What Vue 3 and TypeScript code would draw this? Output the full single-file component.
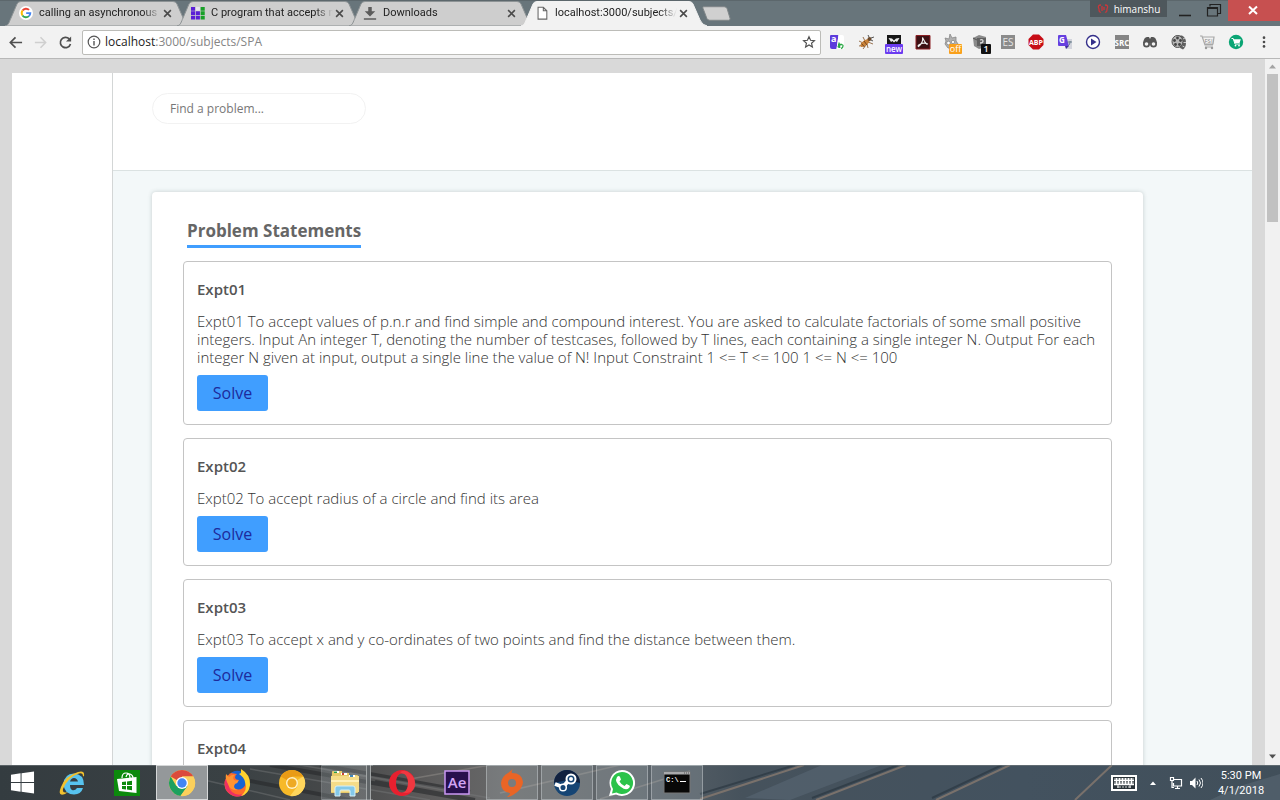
<script setup lang="ts">
import { ref } from 'vue'

interface Tab { title: string; icon: string; active: boolean }
interface Problem { name: string; text: string }

const tabs: Tab[] = [
  { title: 'calling an asynchronous f', icon: 'google', active: false },
  { title: 'C program that accepts n', icon: 'grid', active: false },
  { title: 'Downloads', icon: 'download', active: false },
  { title: 'localhost:3000/subjects/S', icon: 'page', active: true },
]

const extensions: string[] = [
  'translate', 'bug', 'mail', 'acrobat', 'cat', 'cube', 'es', 'abp',
  'gtranslate', 'play', 'src', 'binoculars', 'reel', 'fsi', 'cart',
]

const problems: Problem[] = [
  {
    name: 'Expt01',
    text: 'Expt01 To accept values of p.n.r and find simple and compound interest. You are asked to calculate factorials of some small positive integers. Input An integer T, denoting the number of testcases, followed by T lines, each containing a single integer N. Output For each integer N given at input, output a single line the value of N! Input Constraint 1 <= T <= 100 1 <= N <= 100',
  },
  { name: 'Expt02', text: 'Expt02 To accept radius of a circle and find its area' },
  { name: 'Expt03', text: 'Expt03 To accept x and y co-ordinates of two points and find the distance between them.' },
  { name: 'Expt04', text: '' },
]

const apps: { id: string; state: string }[] = [
  { id: 'ie', state: '' },
  { id: 'store', state: '' },
  { id: 'chrome', state: 'current' },
  { id: 'firefox', state: '' },
  { id: 'canary', state: '' },
  { id: 'explorer', state: 'stacked' },
  { id: 'opera', state: '' },
  { id: 'ae', state: '' },
  { id: 'origin', state: 'open' },
  { id: 'steam', state: 'open' },
  { id: 'whatsapp', state: 'open' },
  { id: 'cmd', state: 'open' },
]

const query = ref('')
</script>

<template>
  <div class="screen">
    <header class="tabstrip">
      <div class="tabs">
        <div v-for="t in tabs" :key="t.title" class="tab" :class="{ active: t.active }">
          <svg class="tab-shape" viewBox="0 0 186 26" preserveAspectRatio="none" aria-hidden="true">
            <path d="M0 26C4 25 4 22 6 18L12 4Q13 1.500 16 1.500H168Q171 1.500 172 4L179 20Q181 25 186 26Z" />
          </svg>
          <svg class="favicon" viewBox="0 0 16 16" aria-hidden="true">
            <template v-if="t.icon === 'google'">
              <circle cx="8" cy="8" r="8" fill="#fff" />
              <g fill="none" stroke-width="2.200">
                <path d="M4 5.200A4.900 4.900 0 0 1 11.500 4.500" stroke="#ea4335" />
                <path d="M4 5.200A4.900 4.900 0 0 0 4 10.800" stroke="#fbbc05" />
                <path d="M4 10.800A4.900 4.900 0 0 0 11.300 11.600" stroke="#34a853" />
                <path d="M11.300 11.600A4.700 4.700 0 0 0 12.900 8.100H8.200" stroke="#4285f4" />
              </g>
            </template>
            <template v-else-if="t.icon === 'grid'">
              <path d="M0 1h4.700v4.400H0zM0 6h4.700v4.400H0zM0 11h4.700v4.400H0zM5.500 6h4.700v4.400H5.500zM5.500 11h4.700v4.400H5.500z" fill="#5b1fd6" />
              <path d="M11 1h4.700v4.400H11zM11 6h4.700v4.400H11zM11 11h4.700v4.400H11z" fill="#18a028" />
              <path d="M5.500 1h4.700v4.400H5.500z" fill="#e8e4ee" />
            </template>
            <template v-else-if="t.icon === 'download'">
              <path d="M6 1h4v5h4L8 12 2 6h4zM1 14h14v1.800H1z" fill="#5c5c5c" />
            </template>
            <template v-else>
              <path d="M3.500 1.500h6l4 4v9.500h-10zM9.500 1.500v4h4" fill="#fff" stroke="#666" stroke-width="1.200" />
            </template>
          </svg>
          <button type="button" class="tab-title">{{ t.title }}</button>
          <button type="button" class="tab-close" aria-label="Close tab">
            <svg viewBox="0 0 8 8" aria-hidden="true"><path d="M1 1l6 6M7 1L1 7" stroke="#4a4a4a" stroke-width="1.400" /></svg>
          </button>
        </div>
        <button type="button" class="new-tab" aria-label="New tab">
          <svg viewBox="0 0 30 15" aria-hidden="true"><path d="M1.500.5H23q2 0 3 2l3 10q.5 2-1.500 2H8q-2 0-3-2L1 2Q.5.500 1.500.500z" fill="#d0d0d0" stroke="#7f8688" /></svg>
        </button>
      </div>
      <div class="window-controls">
        <button type="button" class="profile">
          <svg viewBox="0 0 12 10" aria-hidden="true"><path d="M4 1Q0 1 2 5q0 4 2 3M5 2v5M8 1q4 0 2 4 0 4-2 3M7 3v3" fill="none" stroke="#c9373b" stroke-width="1.300" /></svg>
          himanshu
        </button>
        <button type="button" class="win" aria-label="Minimize"><svg viewBox="0 0 16 16" aria-hidden="true"><path d="M2 12.500h12" stroke="#222" stroke-width="1.600" /></svg></button>
        <button type="button" class="win" aria-label="Restore"><svg viewBox="0 0 16 16" aria-hidden="true"><path d="M1.500 4.500h10v8.500h-10zM1.500 5.500h10M4 3.500V1.500h10.500v9H12" fill="none" stroke="#222" stroke-width="1.200" /></svg></button>
        <button type="button" class="win close" aria-label="Close"><svg viewBox="0 0 16 16" aria-hidden="true"><path d="M3 3.500l8 7.500M11 3.500l-8 7.500" stroke="#fff" stroke-width="2" /></svg></button>
      </div>
    </header>

    <div class="toolbar">
      <button type="button" class="nav" aria-label="Back"><svg viewBox="0 0 16 16" aria-hidden="true"><path d="M15 8H3M8 2.500L2.500 8 8 13.500" fill="none" stroke="#4f4f4f" stroke-width="1.800" /></svg></button>
      <button type="button" class="nav" aria-label="Forward"><svg viewBox="0 0 16 16" aria-hidden="true"><path d="M2 8h11M8 2.500L13.500 8 8 13.500" fill="none" stroke="#cfcfcf" stroke-width="1.600" /></svg></button>
      <button type="button" class="nav" aria-label="Reload"><svg viewBox="0 0 16 16" aria-hidden="true"><path d="M13.300 9.500A5.500 5.500 0 1 1 12 4.200" fill="none" stroke="#4f4f4f" stroke-width="1.800" /><path d="M14 1.500V7H8.500z" fill="#4f4f4f" /></svg></button>
      <div class="address">
        <svg class="info" viewBox="0 0 14 14" aria-hidden="true"><circle cx="7" cy="7" r="5.800" fill="none" stroke="#555" stroke-width="1.200" /><path d="M7 6v4.500M7 3.500v1.500" stroke="#555" stroke-width="1.400" /></svg>
        <span class="url"><b>localhost</b>:3000/subjects/SPA</span>
        <button type="button" class="star" aria-label="Bookmark this page"><svg viewBox="0 0 16 16" aria-hidden="true"><path d="M8 2l1.800 4.100 4.400.4-3.300 2.900 1 4.300L8 11.400l-3.900 2.300 1-4.300L1.800 6.500l4.400-.4z" fill="none" stroke="#4f4f4f" stroke-width="1.300" /></svg></button>
      </div>
      <div class="extensions">
        <button v-for="e in extensions" :key="e" type="button" class="ext" :aria-label="e">
          <svg viewBox="0 0 20 20" aria-hidden="true">
            <template v-if="e === 'translate'">
              <path d="M4 3h7.500l-2 14H5q-2 0-2-2V4q0-1 1-1z" fill="#5c3bdc" /><path d="M11.500 3H15q2 0 2 2v12H9.500z" fill="#fff" />
              <text x="4" y="9.500" font-size="9" font-weight="700" fill="#fff">a</text><path d="M12 10.500l.8 5.500M11 12.500h4M12 15.500q-2-1 .5-2.500 4-1 3.500 1 0 2-2 2.500" fill="none" stroke="#2aa845" stroke-width="1.300" />
            </template>
            <template v-else-if="e === 'bug'">
              <path d="M3 9l4 2M7 5l2 4M3 14l5-1M7 17l3-4M12 16l-1-4M17 12l-5-2" stroke="#805025" stroke-width=".8" /><ellipse cx="9" cy="11" rx="5.500" ry="2.600" transform="rotate(-38 9 11)" fill="#c98238" /><path d="M5.500 11.500l3 3.500M8 9l3 4" stroke="#75441c" /><circle cx="13.500" cy="7" r="2" fill="#6b4a2c" /><path d="M13 5l-1-2M15 6l3-1M15 8l2 1" stroke="#555" />
            </template>
            <template v-else-if="e === 'mail'">
              <path d="M3 3h14v10H3z" fill="#161616" /><path d="M4.500 6l3.500.5L10 8.500l2-2 3.500-.5-2.500 4-1.500-1-1.500 1.500L8.500 9 7 10z" fill="#eee" /><rect x="1" y="12" width="18" height="10" rx="1" fill="#6b3cf0" /><text x="10" y="20" font-size="8" font-weight="600" text-anchor="middle" fill="#fff">new</text>
            </template>
            <template v-else-if="e === 'acrobat'">
              <path d="M3 3.500h14v13.500H3z" fill="#3c1114" stroke="#8c2025" /><path d="M9.500 5.500q1 5-4 9-1.500-1 3-3 4-1 6 .5-1 1.500-5-6.500z" fill="none" stroke="#eee" stroke-width="1.100" />
            </template>
            <template v-else-if="e === 'cat'">
              <path d="M5 9l-1-3 4 1 1-5 2 4 4-1v4l2 3-4 4H7l-3-4z" fill="#b0b0b0" stroke="#888" stroke-width=".8" /><circle cx="7.500" cy="11" r="1.800" fill="#fff" stroke="#777" stroke-width=".6" /><circle cx="12" cy="10" r="1.600" fill="#fff" stroke="#777" stroke-width=".6" /><rect x="8" y="12" width="13" height="10" rx="1" fill="#f9a01b" /><text x="14.500" y="20" font-size="9" text-anchor="middle" fill="#fff">off</text>
            </template>
            <template v-else-if="e === 'cube'">
              <path d="M3 6l6-3 7 2v10l-7 2-5-3z" fill="#8a8a8a" /><path d="M7 6h9v8H7z" fill="#606060" /><path d="M3 6l4 2" stroke="#555" /><path d="M10 8q3-1 3 1t-3 2" fill="none" stroke="#ddd" stroke-width="1.300" /><rect x="11" y="12" width="10" height="10" rx="1" fill="#111" /><text x="16" y="20" font-size="9" font-weight="600" text-anchor="middle" fill="#fff">1</text>
            </template>
            <template v-else-if="e === 'es'">
              <path d="M3 3h14v14H3z" fill="#8b8b8b" /><text x="10" y="13.500" font-size="10" text-anchor="middle" fill="#e4e4e4">ES</text>
            </template>
            <template v-else-if="e === 'abp'">
              <path d="M7 2.500h6L17.500 7v6L13 17.500H7L2.500 13V7z" fill="#c70d16" /><text x="10" y="12.500" font-size="7" font-weight="700" text-anchor="middle" fill="#fff">ABP</text>
            </template>
            <template v-else-if="e === 'gtranslate'">
              <path d="M10 7h7v10h-6z" fill="#d2d4dc" /><path d="M4 3h7l3 11H4q-1 0-1-1V4q0-1 1-1z" fill="#6640df" /><path d="M10 14h4l-3 3z" fill="#3e2b9e" /><text x="4" y="11" font-size="8" font-weight="700" fill="#fff">G</text><path d="M12.500 10H17M15 9v1q0 3-2 4" fill="none" stroke="#667c8a" />
            </template>
            <template v-else-if="e === 'play'">
              <circle cx="10" cy="10" r="6.500" fill="#fff" stroke="#35308b" stroke-width="1.400" /><path d="M8 6.500l5.500 3.500L8 13.500z" fill="#35308b" />
            </template>
            <template v-else-if="e === 'src'">
              <path d="M3 3h14v14H3z" fill="#858585" /><text x="10" y="13.500" font-size="8" font-weight="700" text-anchor="middle" fill="#fff">SRC</text>
            </template>
            <template v-else-if="e === 'binoculars'">
              <path d="M3 11q1-6 4-6h2l1 2 1-2h2q3 0 4 6z" fill="#555" /><circle cx="6.500" cy="12" r="3.500" fill="#555" /><circle cx="13.500" cy="12" r="3.500" fill="#555" /><circle cx="6.500" cy="12" r="1.800" fill="#f2f2f2" /><circle cx="13.500" cy="12" r="1.800" fill="#f2f2f2" />
            </template>
            <template v-else-if="e === 'reel'">
              <path d="M8 3.500h5q4 2 4 7t-3 7q-3-1-4-3z" fill="#606060" /><ellipse cx="8.500" cy="9.500" rx="5.500" ry="6" fill="#b7b7b7" stroke="#4e4e4e" /><g fill="#444"><circle cx="8.500" cy="6" r="1.400" /><circle cx="5.500" cy="8.500" r="1.400" /><circle cx="11.500" cy="8.500" r="1.400" /><circle cx="6.500" cy="12.500" r="1.400" /><circle cx="10.500" cy="12.500" r="1.400" /></g><path d="M14 7l2-1M14.500 10.500h2.500M13.500 14l2 1" stroke="#ccc" />
            </template>
            <template v-else-if="e === 'fsi'">
              <path d="M3 4h2l3 9h8M6 5h11l-1 7H8M8 15h8" fill="none" stroke="#a8a8a8" stroke-width="1.200" /><text x="7.500" y="11" font-size="6" fill="#888">FSI</text><circle cx="9" cy="16" r="1.200" fill="#999" /><circle cx="15" cy="16" r="1.200" fill="#999" />
            </template>
            <template v-else>
              <circle cx="10" cy="10" r="7.200" fill="#0aa574" /><path d="M5.500 6.500h1.700L9 12h5" fill="none" stroke="#fff" /><path d="M7.500 7.300h7.300L13.500 11H8.600z" fill="#fff" /><circle cx="9.500" cy="13.600" r=".9" fill="#fff" /><circle cx="13" cy="13.600" r=".9" fill="#fff" />
            </template>
          </svg>
        </button>
      </div>
      <button type="button" class="menu" aria-label="Menu"><svg viewBox="0 0 16 16" aria-hidden="true"><g fill="#4a4a4a"><circle cx="8" cy="3" r="1.500" /><circle cx="8" cy="8" r="1.500" /><circle cx="8" cy="13" r="1.500" /></g></svg></button>
    </div>

    <div class="viewport">
      <div class="page">
        <aside class="sidebar"></aside>
        <main class="main">
          <div class="search-bar">
            <input v-model="query" type="text" class="search" placeholder="Find a problem..." aria-label="Find a problem" />
          </div>
          <div class="body">
            <section class="card">
              <h2>Problem Statements</h2>
              <article v-for="p in problems" :key="p.name" class="problem">
                <h3>{{ p.name }}</h3>
                <p>{{ p.text }}</p>
                <button type="button" class="solve">Solve</button>
              </article>
            </section>
          </div>
        </main>
      </div>
      <div class="scrollbar" aria-hidden="true">
        <svg class="arrow" viewBox="0 0 15 14"><path d="M4 9l3.500-4L11 9z" fill="#a3a3a3" /></svg>
        <div class="thumb"></div>
        <svg class="arrow" viewBox="0 0 15 14"><path d="M4 4l3.500 4L11 4z" fill="#505050" /></svg>
      </div>
    </div>

    <footer class="taskbar">
      <svg class="wallpaper" viewBox="0 0 1280 35" preserveAspectRatio="none" aria-hidden="true">
        <defs>
          <linearGradient id="deck" x1="0" x2="1" y1="0" y2="0">
            <stop offset="0" stop-color="#343c40" /><stop offset=".18" stop-color="#3a4144" /><stop offset=".26" stop-color="#464849" /><stop offset=".33" stop-color="#5b5a5a" /><stop offset=".4" stop-color="#68696a" /><stop offset=".5" stop-color="#5c646a" /><stop offset=".58" stop-color="#46525c" /><stop offset=".8" stop-color="#43525f" /><stop offset="1" stop-color="#414f5a" />
          </linearGradient>
        </defs>
        <path d="M0 0h1280v35H0z" fill="url(#deck)" />
        <path d="M270 0l200 35M320 0l150 27M375 17l100 18M240 14l110 21" stroke="#27292b" stroke-width="4" opacity=".6" />
        <path d="M250 4l180 31M300 0l190 33M350 8l120 20M200 14l90 21" stroke="#7d7f80" stroke-width="1.500" opacity=".4" />
        <path d="M410 14L490 0M500 28L620 0M600 34L690 6" stroke="#94908c" stroke-width="1.500" opacity=".5" />
        <path d="M745 33L822 0h60L790 35z" fill="#62707f" opacity=".4" />
        <g stroke="#87796f" stroke-width="2" opacity=".8"><path d="M700 34L804 0M816 35L906 0M936 35L1010 0M1075 35L1112 0" /></g>
        <g stroke="#27333d" stroke-width="2" opacity=".6"><path d="M700 29L795 0M812 33L898 0M932 33L1002 0" /></g>
        <path d="M1210 35l30-14 40-12v26z" fill="#65727f" opacity=".4" />
        <path d="M0 .5h1280" stroke="#747c80" opacity=".6" />
      </svg>
      <button type="button" class="start" aria-label="Start"><svg viewBox="0 0 26 26" aria-hidden="true"><path d="M1 5l10-1.500v9H1zM12 3.300L25 1.500v11H12zM1 13.500h10v9L1 21zM12 13.500h13v11l-13-1.800z" fill="#fff" /></svg></button>
      <div class="apps">
        <button v-for="a in apps" :key="a.id" type="button" class="app" :class="a.state" :aria-label="a.id">
          <svg viewBox="0 0 28 28" aria-hidden="true">
            <template v-if="a.id === 'ie'">
              <path d="M7 16h19q0-11-10-11.500Q6 5 5.500 15 6 25 16 25.500q7 0 9-6.500h-6q-2 3-5 2-2-1-2-5zM12 12.500q1-3.500 4-3.500t4 3.500z" fill="#57c3ef" fill-rule="evenodd" /><path d="M26 7q1-6-6-4Q7 7 3 18q-4 10 4 7l3-2Q4 25 5 20 10 8 21 4.500q4-1 4 3z" fill="#f2c12e" />
            </template>
            <template v-else-if="a.id === 'store'">
              <path d="M1 1h26v26H1z" fill="#0c8a0c" /><path d="M4 10l19.500-2v16L6 22z" fill="#fff" /><path d="M9 9q0-5 4-5t4 5M13 8q1-4 4-3 3 1 3 4" fill="none" stroke="#fff" stroke-width="1.200" /><path d="M9 13l4-.5v3.500H9zM14 12.400l5-.7V16h-5zM9 17h4v3.500L9 20zM14 17h5v4.300l-5-.7z" fill="#0c8a0c" />
            </template>
            <template v-else-if="a.id === 'chrome'">
              <circle cx="14" cy="14" r="13" fill="#fbd05b" /><path d="M14 14L2.700 7.500A13 13 0 0 1 25.300 7.500H14z" fill="#db4a3c" /><path d="M14 14L8.400 17.200 2.700 7.500A13 13 0 0 0 12.500 26.900L19.600 17z" fill="#1da05f" /><path d="M25.300 7.500H14l5.600 9.700L12.500 27A13 13 0 0 0 25.300 7.500z" fill="#fbd05b" /><circle cx="14" cy="14" r="6" fill="#fff" /><circle cx="14" cy="14" r="4.700" fill="#4285f4" />
            </template>
            <template v-else-if="a.id === 'firefox'">
              <circle cx="14" cy="15" r="12.500" fill="#ff6a2b" /><path d="M2 11q-2 12 9 16 8 2 12-3-8 4-14-1-5-5-3-14z" fill="#ee2f63" /><path d="M8 4q5-4 11-1l3 6q2 7-2 10-5 3-9 0-3-3 0-5 3-1 5-3-3 0-4-2 0-3 2-4z" fill="#1763d4" /><path d="M18 0q10 6 9 16-1 9-9 11 7-6 4-14-1-5-6-8l2-1z" fill="#ffd22e" /><path d="M3 5l3 3q3-3 6-2-3 2-1 5 3 1 5 0-1 3-4 4-3 4 3 6-8 1-10-6-3-5-2-10z" fill="#ff9430" />
            </template>
            <template v-else-if="a.id === 'canary'">
              <circle cx="14" cy="14" r="13" fill="#f7b928" /><path d="M14 14L2.700 7.500A13 13 0 0 1 25.300 7.500H14z" fill="#e99b16" /><path d="M25.300 7.500L14 14l5 4-7 9A13 13 0 0 0 25.300 7.500z" fill="#ffd65c" /><circle cx="14" cy="14" r="6" fill="#fff2c8" /><circle cx="14" cy="14" r="4.600" fill="#eeaa24" />
            </template>
            <template v-else-if="a.id === 'explorer'">
              <path d="M1 3q0-1 1-1h9v2h7v2h8q1 0 1 1v17H0z" fill="#e6c968" /><path d="M0 7h28v16H0z" fill="#f5dc88" /><path d="M0 12h28" stroke="#fff0b7" stroke-width="2" /><path d="M3 2h5v2H3z" fill="#fff" /><path d="M3 2.500h3v1.500H3z" fill="#2a9b45" /><path d="M10 4h6v2h-6z" fill="#fff" /><path d="M11 4h2v2h-2z" fill="#cc4435" /><path d="M18 6h6v2h-6z" fill="#fff" /><path d="M19 6h3v2h-3z" fill="#3e87bd" /><path d="M4 19q0-2 2-2h16q2 0 2 2v8h-5v-5q0-1-1-1h-8q-1 0-1 1v5H4z" fill="#84c9e9" stroke="#d6f1fa" />
            </template>
            <template v-else-if="a.id === 'opera'">
              <path d="M14 1a13 13 0 1 0 0 26 13 13 0 1 0 0-26zM14 4.500c8 0 8 19 0 19s-8-19 0-19z" fill="#e8202f" fill-rule="evenodd" /><path d="M14 4.500c8 0 8 19 0 19 15 3 17-12 8-19Q18 0 12 3z" fill="#ff5a5a" opacity=".4" />
            </template>
            <template v-else-if="a.id === 'ae'">
              <path d="M2 2h24v23H2z" fill="#28104d" stroke="#c997f2" stroke-width="1.500" /><text x="14" y="19" font-size="15" font-weight="600" text-anchor="middle" fill="#d3a5f5">Ae</text>
            </template>
            <template v-else-if="a.id === 'origin'">
              <path d="M15 0q-2 3-1 4 10 0 11 9 0 7-10 13-3 2-6 2 3-2 3-4Q3 23 3 14 4 7 10 4zM14 10a4 4 0 1 0 0 8 4 4 0 0 0 0-8z" fill="#e96526" fill-rule="evenodd" />
            </template>
            <template v-else-if="a.id === 'steam'">
              <circle cx="14" cy="14" r="13" fill="#164574" /><path d="M1 14a13 13 0 0 1 26 0L14 11z" fill="#11213f" /><path d="M2 15l8 3 7-8" fill="none" stroke="#fff" stroke-width="4" /><circle cx="18" cy="10" r="4.500" fill="#164574" stroke="#fff" stroke-width="2" /><circle cx="18" cy="10" r="2" fill="#fff" /><circle cx="10" cy="18.500" r="3.300" fill="#164574" stroke="#fff" stroke-width="1.500" />
            </template>
            <template v-else-if="a.id === 'whatsapp'">
              <path d="M14 1a13 13 0 1 1-6 24.500L1 27l2-7A13 13 0 0 1 14 1z" fill="#fff" /><path d="M14 3a11 11 0 1 1-5.500 20.500L4 24.500l1-4.500A11 11 0 0 1 14 3z" fill="#2bc34a" /><path d="M9 8q2-2 3 0l1 2.500-1.500 2q2 3.500 5 4.500l2-2 3 1.500q1 1-.5 2.500-3 3-8-1-7-5-4-10z" fill="#fff" />
            </template>
            <template v-else>
              <path d="M1 3h26v21H1z" fill="#080808" stroke="#777" /><path d="M1 3h26v2.500H1z" fill="#a9aaac" /><path d="M21 4h1M23 4h1M25 4h1" stroke="#555" /><text x="3" y="13" class="mono" font-size="7" fill="#fff">C:\</text><path d="M17 12.500h6" stroke="#fff" />
            </template>
          </svg>
        </button>
      </div>
      <div class="tray">
        <svg class="keyboard" viewBox="0 0 26 16" aria-hidden="true"><path d="M1 1h24v14H1z" fill="#293238" stroke="#fff" stroke-width="2" /><path d="M3 5.500h20M3 9.500h20M5.500 3v6M8.500 3v6M11.500 3v6M14.500 3v6M17.500 3v6M20.500 3v6M7 13v-2.500M19 13v-2.500" stroke="#fff" stroke-width="1.300" /><path d="M3 4h20M3 8h20M8 12h10" stroke="#fff" stroke-width=".8" stroke-dasharray="2 1" /></svg>
        <svg class="up" viewBox="0 0 6 4" aria-hidden="true"><path d="M0 4l3-3.500L6 4z" fill="#fff" /></svg>
        <svg class="glyph" viewBox="0 0 14 14" aria-hidden="true"><path d="M5 3.500h7.500v6.500H4.500V7M8.500 10v2.500M6 12.500h5M1.500 1.500h3v3h-3zM3 4.500v7h2" fill="none" stroke="#fff" stroke-width="1.200" /></svg>
        <svg class="glyph" viewBox="0 0 14 14" aria-hidden="true"><path d="M1 5h2l3.500-3.500v11L3 9H1z" fill="#fff" /><path d="M8 5q1.500 2 0 4M10 3.500q3 3.500 0 7M12 2q4 5 0 10" fill="none" stroke="#fff" /></svg>
        <div class="clock"><span>5:30 PM</span><span>4/1/2018</span></div>
      </div>
    </footer>
  </div>
</template>

<style>
body { margin: 0; overflow: hidden; }
</style>

<style scoped>
.screen { height: 100vh; display: flex; flex-direction: column; overflow: hidden; font-family: "Open Sans", "Noto Sans", sans-serif; color: #666; }
button { border: 0; padding: 0; margin: 0; background: none; font: inherit; color: inherit; }
svg { display: block; flex: none; }
svg text { font-family: "Open Sans", sans-serif; }
svg .mono { font-family: "Liberation Mono", monospace; font-weight: 700; }

.tabstrip { flex: none; height: 26px; display: flex; justify-content: space-between; background: #68757b; box-shadow: inset 0 1px #5c676c; }
.tabs { display: flex; padding-left: 5px; }
.tab { position: relative; width: 186px; height: 26px; margin-right: -14px; display: flex; align-items: center; box-sizing: border-box; padding: 0 19px 0 14px; color: #222; }
.tab.active { z-index: 1; }
.tab-shape { position: absolute; inset: 0; width: 100%; height: 100%; fill: #cecece; stroke: #8d9395; }
.active .tab-shape { fill: #f2f2f2; stroke: #f2f2f2; }
.favicon { position: relative; width: 14px; height: 14px; }
.tab-title { position: relative; flex: 1; min-width: 0; margin: 0 2px 0 6px; white-space: nowrap; text-align: left; font-family: Roboto, sans-serif; font-size: 11px; line-height: 18px; mask-image: linear-gradient(to right, #000 104px, transparent 122px); }
.tab-close { position: relative; width: 9px; height: 9px; }
.tab-close svg { width: 9px; height: 9px; }
.new-tab { margin-left: 9px; align-self: center; }
.new-tab svg { width: 29px; height: 15px; }
.window-controls { display: flex; align-items: flex-start; }
.profile { width: 77px; height: 17px; margin-right: 3px; display: flex; align-items: center; justify-content: center; gap: 5px; background: #4e575c; color: #fff; font-size: 10px; line-height: 16px; }
.profile svg { width: 12px; height: 10px; }
.win { width: 29px; height: 21px; display: grid; place-items: center; }
.win svg { width: 16px; height: 16px; }
.win.close { width: 52px; background: #c75050; }

.toolbar { flex: none; height: 32px; display: flex; align-items: center; background: #f2f2f2; border-bottom: 1px solid #b8b8b8; padding: 0 2px 0 3px; }
.nav { width: 25px; height: 25px; display: grid; place-items: center; }
.nav svg { width: 15px; height: 15px; }
.address { flex: 1; min-width: 0; height: 25px; box-sizing: border-box; margin: 0 2px 0 4px; padding: 0 4px; display: flex; align-items: center; background: #fff; border: 1px solid #bcbcb8; border-radius: 2px; font-size: 12px; }
.info { width: 14px; height: 14px; }
.url { flex: 1; margin-left: 4px; color: #858585; line-height: 18px; }
.url b { font-weight: 400; color: #222; }
.star svg { width: 14px; height: 14px; }
.extensions { width: 427px; display: grid; grid-template-columns: repeat(15, 1fr); }
.ext { display: grid; place-items: center; }
.ext svg { width: 20px; height: 20px; overflow: visible; }
.menu { width: 28px; display: grid; place-items: center; }
.menu svg { width: 14px; height: 14px; }

.viewport { flex: 1; min-height: 0; display: flex; background: #d9d9d9; overflow: hidden; }
.page { flex: 1; min-width: 0; margin: 14px 13px 0 12px; display: flex; background: #fff; }
.sidebar { width: 100px; flex: none; border-right: 1px solid #d3d6d6; }
.main { flex: 1; min-width: 0; display: flex; flex-direction: column; }
.search-bar { flex: none; height: 98px; box-sizing: border-box; padding: 20px 39px; background: #fff; border-bottom: 1px solid #dbe2e2; }
.search { display: block; width: 214px; height: 31px; box-sizing: border-box; padding: 0 17px; border: 1px solid #f2f2f2; border-radius: 16px; background: #fff; font: 12px/18px "Open Sans", sans-serif; color: #666; outline: 0; }
.search::placeholder { color: #777; opacity: 1; }
.body { flex: 1; min-height: 0; padding: 21px 109px 0 39px; background: #f3f8f9; }
.card { padding: 27px 31px 0; background: #fff; border-radius: 4px; box-shadow: 0 0 4px rgba(60, 80, 80, 0.25); }
h2 { width: fit-content; margin: 0 0 13px 4px; padding-bottom: 3px; border-bottom: 3px solid #409eff; font-size: 17px; line-height: 23px; font-weight: 700; color: #666; }
.problem { box-sizing: border-box; margin-bottom: 13px; padding: 16px 13px 13px; border: 1px solid #c4c4c4; border-radius: 4px; }
h3 { margin: 0 0 12px; font-size: 15px; line-height: 22px; font-weight: 600; color: #555; }
p { margin: 0 0 9px; font-size: 15px; line-height: 18px; font-weight: 300; color: #333; }
.solve { display: block; width: 71px; height: 36px; border-radius: 3px; background: #409eff; color: #1d2a9c; font-size: 16px; line-height: 22px; font-weight: 400; }
.scrollbar { flex: none; width: 15px; display: flex; flex-direction: column; background: #f1f1f1; }
.arrow { width: 15px; height: 15px; }
.arrow:last-child { margin-top: auto; }
.thumb { height: 148px; margin: 0 2px 0 2px; background: #c1c1c1; }

.taskbar { position: relative; flex: none; height: 35px; display: flex; align-items: stretch; color: #fff; background: #414e57; }
.wallpaper { position: absolute; inset: 0; width: 100%; height: 100%; }
.start, .apps, .tray { position: relative; }
.start { width: 44px; margin-right: 2px; display: grid; place-items: center; }
.start svg { width: 25px; height: 25px; }
.apps { display: flex; gap: 3px; }
.app { width: 52px; height: 35px; box-sizing: border-box; display: grid; place-items: center; border: 1px solid transparent; }
.app svg { width: 28px; height: 28px; }
.app.open { background: rgba(190, 200, 205, 0.2); border-color: rgba(220, 225, 228, 0.4); }
.app.current { background: #94989a; border-color: #d5d7d8; }
.app.stacked { padding-right: 6px; background: linear-gradient(to right, rgba(190, 200, 205, 0.25) 44px, #a2a6a7 44px, #a2a6a7 45px, #606568 45px, #606568 48px, #a2a6a7 48px, #a2a6a7 49px, transparent 49px); border-color: rgba(220, 225, 228, 0.3); border-right: 0; }
.tray { margin-left: auto; padding-right: 12px; display: flex; align-items: center; }
.keyboard { width: 26px; height: 16px; margin-right: 13px; }
.up { width: 6px; height: 4px; margin-right: 13px; }
.glyph { width: 14px; height: 14px; margin-right: 6px; }
.clock { display: flex; flex-direction: column; width: 54px; margin-left: 5px; text-align: center; font-family: Roboto, sans-serif; font-size: 11px; line-height: 15px; white-space: nowrap; }
</style>
